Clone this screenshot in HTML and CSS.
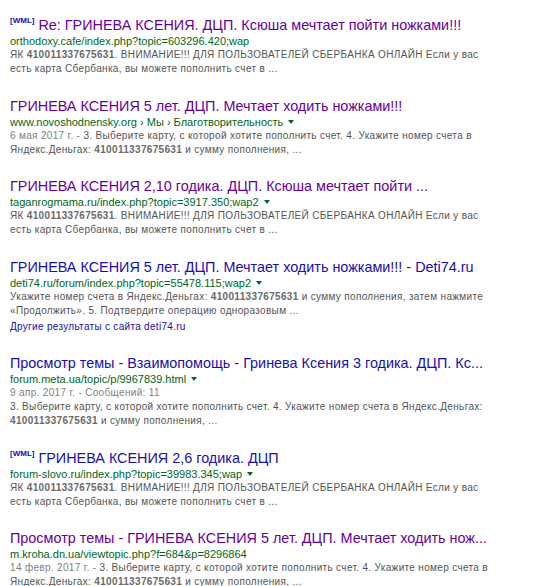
FILE: index.html
```html
<!DOCTYPE html>
<html>
<head>
<meta charset="utf-8">
<link rel="stylesheet" href="styles.css">
</head>
<body>
<div class="results">
  <div class="g">
    <div class="t visited"><span class="wml">[WML]</span> Re: ГРИНЕВА КСЕНИЯ. ДЦП. Ксюша мечтает пойти ножками!!!</div>
    <div class="u">orthodoxy.cafe/index.php?topic=603296.420;wap</div>
    <div class="s">ЯК <b>410011337675631</b>. ВНИМАНИЕ!!! ДЛЯ ПОЛЬЗОВАТЕЛЕЙ СБЕРБАНКА ОНЛАЙН Если у вас<br>есть карта Сбербанка, вы можете пополнить счет в ...</div>
  </div>
  <div class="g">
    <div class="t visited">ГРИНЕВА КСЕНИЯ 5 лет. ДЦП. Мечтает ходить ножками!!!</div>
    <div class="u">www.novoshodnensky.org › Мы › Благотворительность <span class="arr"></span></div>
    <div class="s"><span class="d">6 мая 2017 г. - </span>3. Выберите карту, с которой хотите пополнить счет. 4. Укажите номер счета в<br>Яндекс.Деньгах: <b>410011337675631</b> и сумму пополнения, ...</div>
  </div>
  <div class="g">
    <div class="t visited">ГРИНЕВА КСЕНИЯ 2,10 годика. ДЦП. Ксюша мечтает пойти ...</div>
    <div class="u">taganrogmama.ru/index.php?topic=3917.350;wap2 <span class="arr"></span></div>
    <div class="s">ЯК <b>410011337675631</b>. ВНИМАНИЕ!!! ДЛЯ ПОЛЬЗОВАТЕЛЕЙ СБЕРБАНКА ОНЛАЙН Если у вас<br>есть карта Сбербанка, вы можете пополнить счет в ...</div>
  </div>
  <div class="g">
    <div class="t">ГРИНЕВА КСЕНИЯ 5 лет. ДЦП. Мечтает ходить ножками!!! - Deti74.ru</div>
    <div class="u">deti74.ru/forum/index.php?topic=55478.115;wap2 <span class="arr"></span></div>
    <div class="s">Укажите номер счета в Яндекс.Деньгах: <b>410011337675631</b> и сумму пополнения, затем нажмите<br>«Продолжить». 5. Подтвердите операцию одноразовым ...</div>
    <div class="more">Другие результаты с сайта deti74.ru</div>
  </div>
  <div class="g">
    <div class="t">Просмотр темы - Взаимопомощь - Гринева Ксения 3 годика. ДЦП. Кс...</div>
    <div class="u">forum.meta.ua/topic/p/9967839.html <span class="arr"></span></div>
    <div class="s"><span class="d">9 апр. 2017 г. - Сообщений: 11</span><br>3. Выберите карту, с которой хотите пополнить счет. 4. Укажите номер счета в Яндекс.Деньгах:<br><b>410011337675631</b> и сумму пополнения, ...</div>
  </div>
  <div class="g">
    <div class="t"><span class="wml">[WML]</span> ГРИНЕВА КСЕНИЯ 2,6 годика. ДЦП</div>
    <div class="u">forum-slovo.ru/index.php?topic=39983.345;wap <span class="arr"></span></div>
    <div class="s">ЯК <b>410011337675631</b>. ВНИМАНИЕ!!! ДЛЯ ПОЛЬЗОВАТЕЛЕЙ СБЕРБАНКА ОНЛАЙН Если у вас<br>есть карта Сбербанка, вы можете пополнить счет в ...</div>
  </div>
  <div class="g">
    <div class="t visited">Просмотр темы - ГРИНЕВА КСЕНИЯ 5 лет. ДЦП. Мечтает ходить нож...</div>
    <div class="u">m.kroha.dn.ua/viewtopic.php?f=684&amp;p=8296864</div>
    <div class="s"><span class="d">14 февр. 2017 г. - </span>3. Выберите карту, с которой хотите пополнить счет. 4. Укажите номер счета в<br>Яндекс.Деньгах: <b>410011337675631</b> и сумму пополнения, ...</div>
  </div>
</div>
</body>
</html>
```
FILE: styles.css
```css
html, body {
  margin: 0;
  padding: 0;
  background: #fff;
}
body {
  font-family: "Liberation Sans", Arial, sans-serif;
}
.results {
  padding: 16px 0 0 10px;
}
.g {
  margin-bottom: 20.5px;
}
.t {
  font-size: 14.4px;
  line-height: 18px;
  color: #1a0dab;
  white-space: nowrap;
}
.t.visited {
  color: #660099;
}
.wml {
  font-size: 8px;
  font-weight: bold;
  vertical-align: top;
  line-height: 10px;
  color: #1a0dab;
}
.u {
  font-size: 11px;
  line-height: 14px;
  color: #006621;
  white-space: nowrap;
}
.arr {
  display: inline-block;
  width: 0;
  height: 0;
  border-left: 3px solid transparent;
  border-right: 3px solid transparent;
  border-top: 4px solid #006621;
  margin-left: 2px;
  vertical-align: 2px;
}
.s {
  font-size: 10px;
  line-height: 14px;
  color: #545454;
  letter-spacing: 0.33px;
  white-space: nowrap;
}
.s b {
  color: #6a6a6a;
}
.d {
  color: #808080;
}
.more {
  font-size: 10px;
  line-height: 14px;
  color: #1a0dab;
  margin-top: 2px;
  letter-spacing: 0.3px;
}
```
